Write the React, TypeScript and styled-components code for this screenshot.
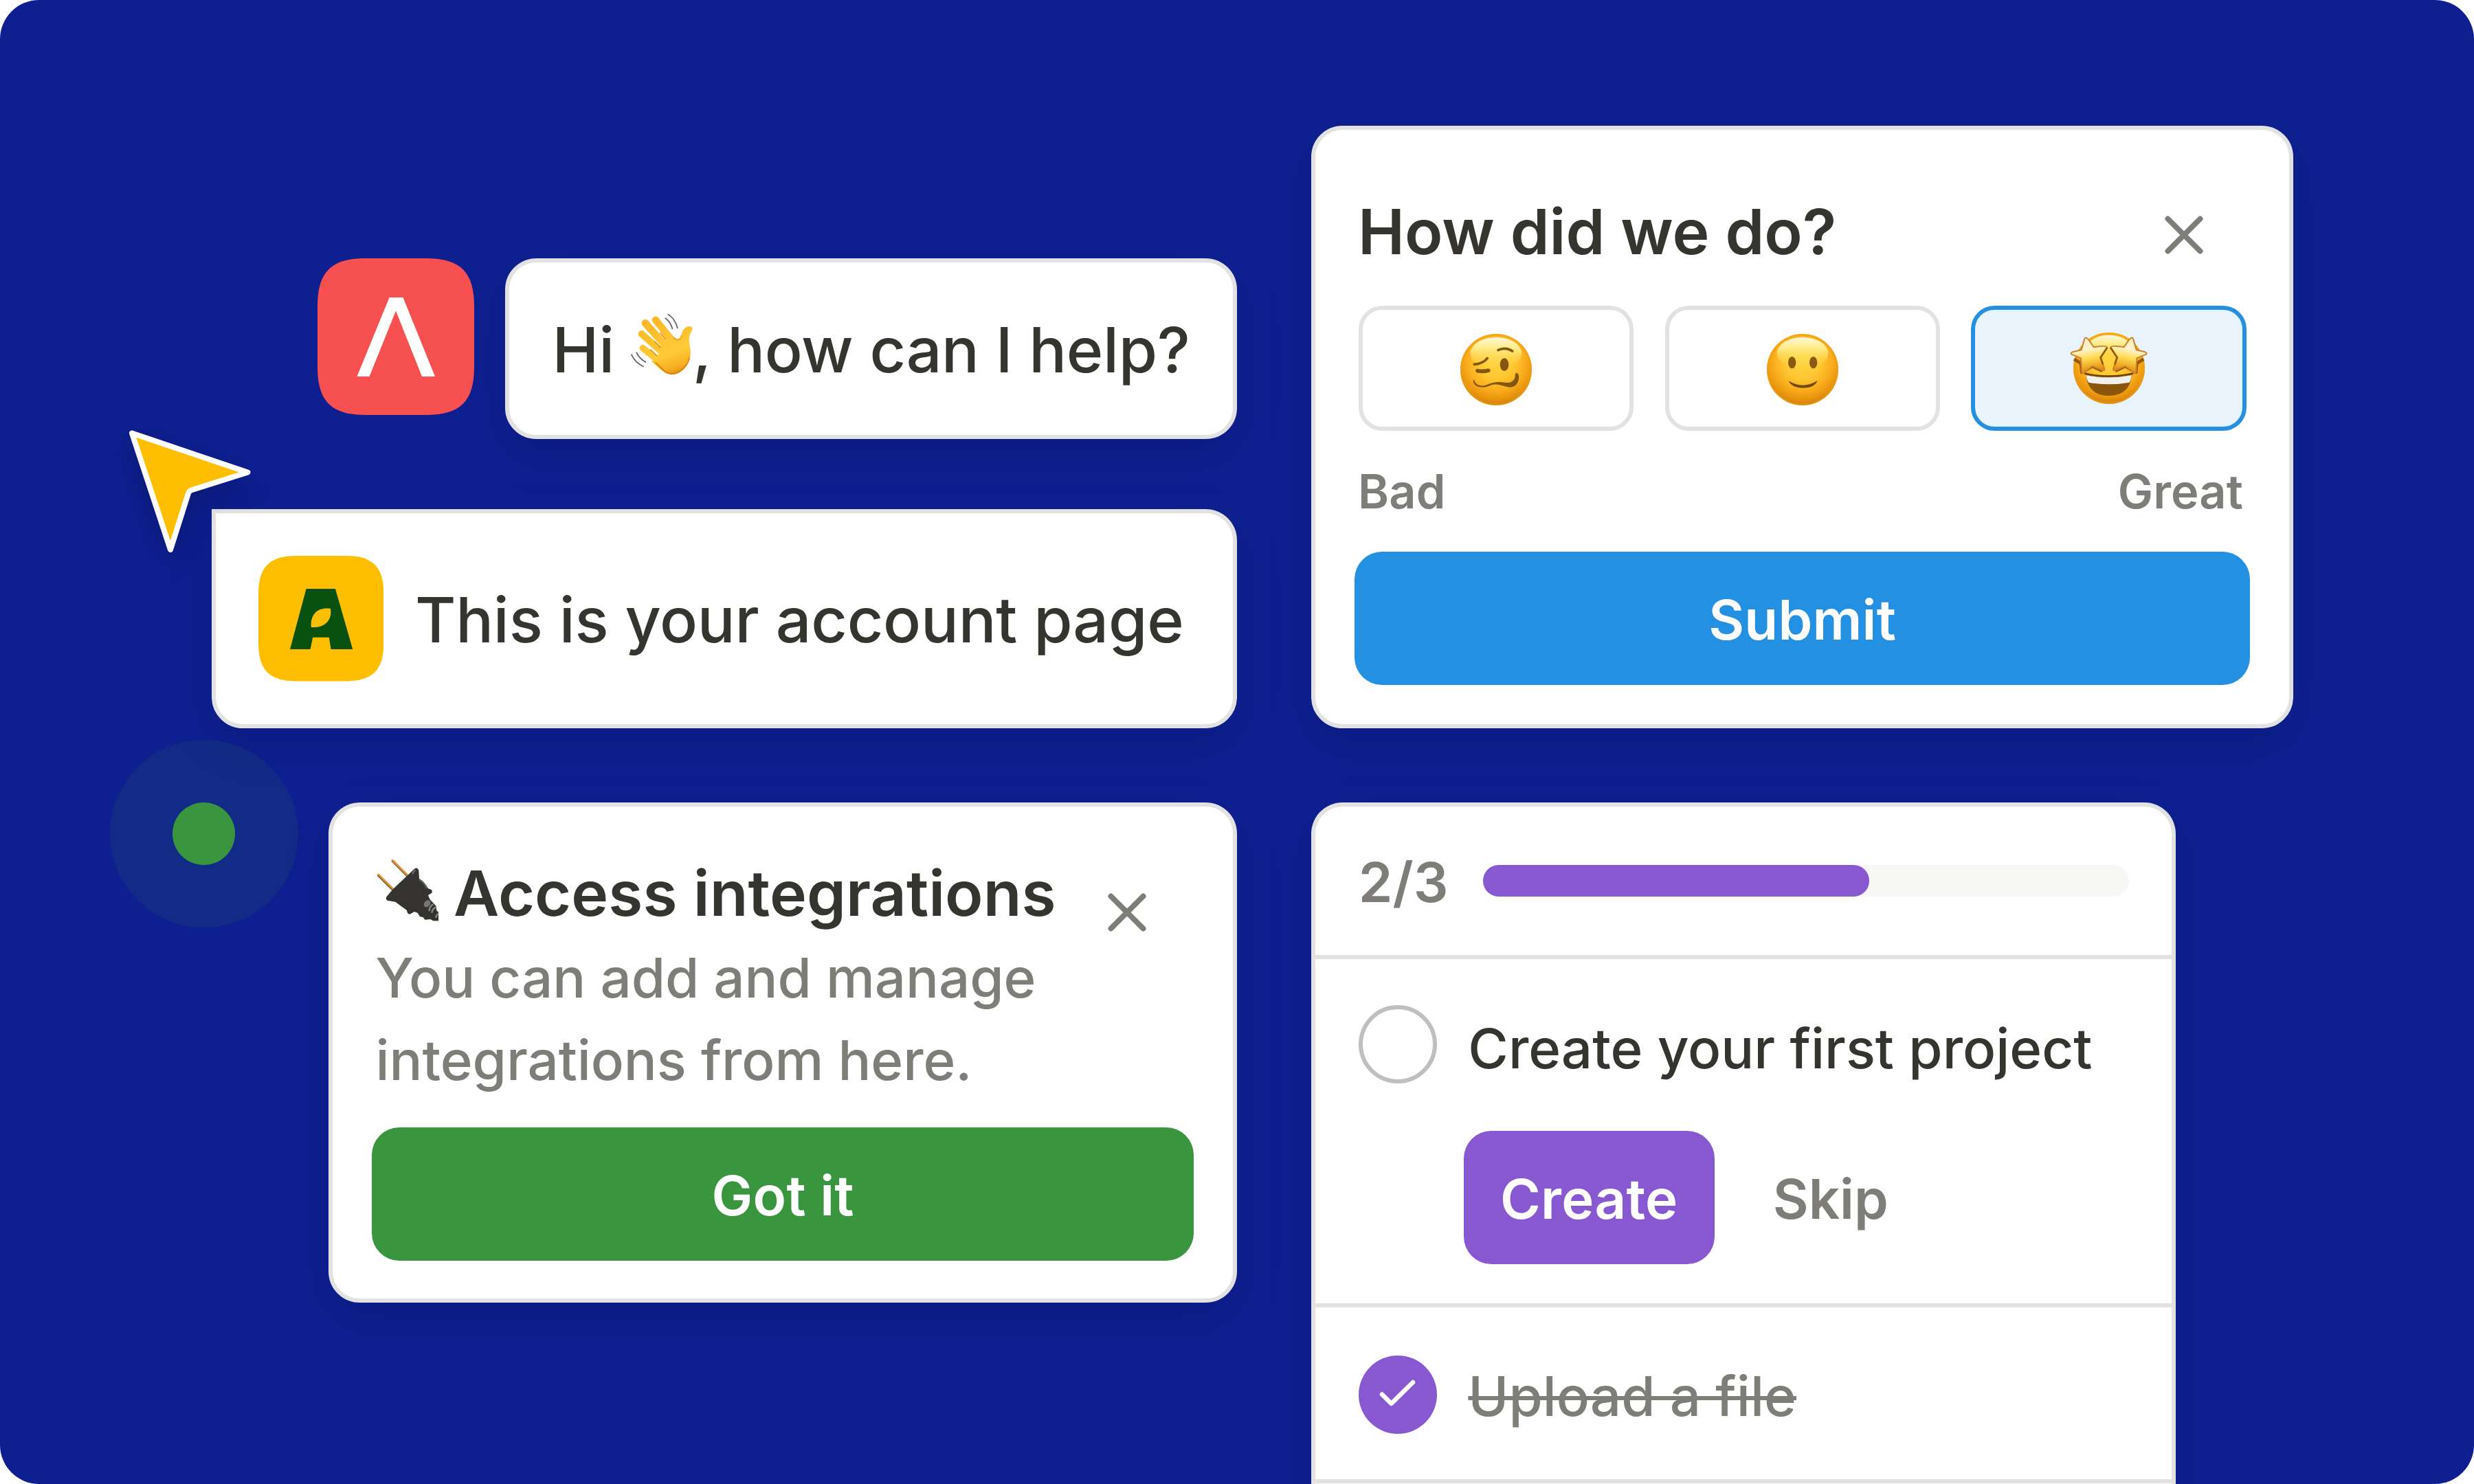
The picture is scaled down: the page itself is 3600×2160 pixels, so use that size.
import React from "react"
import styled, { createGlobalStyle } from "styled-components"


const App = () => {
  return (
    <>
      <GlobalStyle />
      <Canvas>
        <LeftColumn>
          <ChatRow>
            <RedLogo />
            <Bubble>
              <span>Hi</span>
              <WaveEmoji />
              <span>, how can I help?</span>
            </Bubble>
          </ChatRow>

          <CursorBubble>
            <YellowLogo />
            <span>This is your account page</span>
          </CursorBubble>

          <HintCard>
            <HintHead>
              <div>
                <HintTitle>
                  <PlugEmoji />
                  <span>Access integrations</span>
                </HintTitle>
                <HintText>
                  You can add and manage<br />integrations from here.
                </HintText>
              </div>
              <CloseIcon />
            </HintHead>
            <Button $color="#3a963e">Got it</Button>
          </HintCard>
        </LeftColumn>

        <RightColumn>
          <SurveyCard>
            <SurveyHead>
              <SurveyTitle>How did we do?</SurveyTitle>
              <CloseIcon />
            </SurveyHead>
            <Options>
              <Option><WoozyEmoji /></Option>
              <Option><SmileEmoji /></Option>
              <Option $active><StarEmoji /></Option>
            </Options>
            <Labels>
              <span>Bad</span>
              <span>Great</span>
            </Labels>
            <Button $color="#2390e1">Submit</Button>
          </SurveyCard>

          <Checklist>
            <Progress>
              <Count>2/3</Count>
              <Track><Fill /></Track>
            </Progress>
            <Task>
              <TaskLine>
                <Circle />
                <TaskName>Create your first project</TaskName>
              </TaskLine>
              <Actions>
                <CreateButton $color="#8858d1">Create</CreateButton>
                <Skip>Skip</Skip>
              </Actions>
            </Task>
            <DoneTask>
              <Circle $done>
                <svg width="60" height="60" viewBox="0 0 60 60" fill="none">
                  <path d="M7 29.5 20.5 43 52 12" stroke="#fff" strokeWidth="6.5" strokeLinecap="round" strokeLinejoin="round" />
                </svg>
              </Circle>
              <TaskName $done>Upload a file</TaskName>
            </DoneTask>
          </Checklist>
        </RightColumn>

        <Cursor />
        <Beacon><Dot /></Beacon>
      </Canvas>
    </>
  )
}

export default App


const RedLogo = () => (
  <svg width="228" height="228" viewBox="0 0 228 228">
    <path d="M0 70C0 20 20 0 70 0H158C208 0 228 20 228 70V158C228 208 208 228 158 228H70C20 228 0 208 0 158Z" fill="#f75050" />
    <path d="M104.500 57H124.500L171 172H152L114 76.500 75.500 172H57.500Z" fill="#fff" />
  </svg>
)

const YellowLogo = () => (
  <svg width="182.400" height="182.400" viewBox="0 0 228 228">
    <path d="M0 70C0 20 20 0 70 0H158C208 0 228 20 228 70V158C228 208 208 228 158 228H70C20 228 0 208 0 158Z" fill="#ffbf00" />
    <path fillRule="evenodd" d="M87 60H140L171.500 170H132L128.500 148.500H99L94.500 170H57.500ZM96 130C94 106 108 93 131 96C135 115 122 132 96 130Z" fill="#08510f" />
  </svg>
)

const CloseIcon = () => (
  <CloseSvg viewBox="0 0 56 56" fill="none">
    <path d="M4.500 4.500 51.500 51.500M51.500 4.500 4.500 51.500" stroke="#7e7d78" strokeWidth="8" strokeLinecap="round" />
  </CloseSvg>
)

const Cursor = () => (
  <CursorSvg viewBox="0 0 220 220">
    <path d="M32 30.500 200.500 87.500 118 113.500Q115 115 114 118L88 200Z" fill="#ffbf00" stroke="#fff" strokeWidth="8" strokeLinejoin="round" />
  </CursorSvg>
)

const WaveEmoji = () => (
  <WaveSvg viewBox="99 99 300 300" fill="none">
    <defs>
      <linearGradient id="hand" gradientUnits="userSpaceOnUse" x1="230" y1="130" x2="320" y2="385">
        <stop offset="0" stopColor="#ffb726" />
        <stop offset=".6" stopColor="#ffcb38" />
        <stop offset=".85" stopColor="#f7ae22" />
        <stop offset="1" stopColor="#d97f06" />
      </linearGradient>
    </defs>
    <g stroke="url(#hand)" strokeLinecap="round">
      <path d="M222 140 290 225" strokeWidth="31" />
      <path d="M177 154 270 258" strokeWidth="32" />
      <path d="M161 201 255 285" strokeWidth="30" />
      <path d="M166 263 250 330" strokeWidth="29" />
    </g>
    <path d="M300 212C315 233 331 230 335 205C338 182 354 166 372 168C384 170 386 180 378 191C368 205 367 225 370 248C375 272 376 290 371 308C360 350 325 378 292 378C258 377 240 352 205 322L240 285 243 262 267 232 275 215Z" fill="url(#hand)" />
    <g stroke="#e88f12" strokeWidth="5" strokeLinecap="round">
      <path d="M243 197 267 226" />
      <path d="M218 234 243 260" />
      <path d="M200 270 227 296" />
    </g>
    <path d="M300 215C315 232 331 230 335 207" stroke="#ee9d18" strokeWidth="5" />
    <path d="M221 326C250 350 266 376 292 376C325 376 358 348 370 306" stroke="#d98008" strokeWidth="5" />
    <g stroke="#686868" strokeWidth="5.500">
      <path d="M275 115Q307 134 318 177" />
      <path d="M263 131Q287 146 296 181" />
      <path d="M138 281Q150 309 180 325" />
      <path d="M116 290Q132 327 170 344" />
    </g>
  </WaveSvg>
)

const PlugEmoji = () => (
  <PlugSvg viewBox="80 80 274 280" fill="none">
    <g strokeLinecap="round">
      <path d="M151 97 215 161M89 160 152 222" stroke="#5b4526" strokeWidth="6" />
      <path d="M153 93 218 158M91 155 155 218" stroke="#dc9135" strokeWidth="9" />
    </g>
    <path d="M248 130Q262 121 267 138L269 172Q295 188 308 216L321 220Q330 229 322 237L308 245 316 264 343 292 345 312 360 325V357H330L318 350 294 352 287 342 272 338 262 322 248 317 228 328Q216 327 215 311L165 274 130 268Q120 262 127 251L155 218Z" fill="#34332f" />
    <path d="M269 176Q292 190 302 214" stroke="#6b6a67" strokeWidth="6" />
    <path d="M240 150 250 137" stroke="#6b6a67" strokeWidth="7" strokeLinecap="round" />
    <ellipse cx="304" cy="282" rx="13" ry="17" transform="rotate(40 304 282)" fill="#777673" />
    <path d="M330 284Q313 295 313 314M342 297Q325 306 324 322M353 325Q343 332 342 344" stroke="#8b8a87" strokeWidth="7" />
  </PlugSvg>
)

const FaceDefs = ({ id }: { id: string }) => (
  <defs>
    <radialGradient id={id + "-base"} cx=".5" cy=".38" r=".64">
      <stop offset="0" stopColor="#ffd341" />
      <stop offset=".4" stopColor="#fec631" />
      <stop offset=".64" stopColor="#f9ad1c" />
      <stop offset=".84" stopColor="#e8940e" />
      <stop offset="1" stopColor="#c47614" />
    </radialGradient>
    <linearGradient id={id + "-shine"} x1="0" y1="0" x2="0" y2="1">
      <stop offset="0" stopColor="#fff6dc" />
      <stop offset=".3" stopColor="#ffee90" />
      <stop offset="1" stopColor="#ffd53f" stopOpacity="0" />
    </linearGradient>
  </defs>
)

const WoozyEmoji = () => (
  <FaceSvg viewBox="128 73 324 324" fill="none">
    <FaceDefs id="woozy" />
    <circle cx="290" cy="235" r="156" fill="url(#woozy-base)" />
    <circle cx="290" cy="235" r="152" stroke="#f0a010" strokeOpacity=".6" strokeWidth="8" />
    <ellipse cx="290" cy="164" rx="112" ry="70" fill="url(#woozy-shine)" />
    <g stroke="#855611" strokeLinecap="round">
      <path d="M299 150Q330 134 361 154" strokeWidth="11" />
      <path d="M195 212Q233 209 252 185" strokeWidth="11" />
      <path d="M209 240Q233 245 256 239" strokeWidth="17" />
    </g>
    <ellipse cx="326" cy="213" rx="19" ry="28" fill="#855611" />
    <path d="M194 279C200 302 220 308 240 304C268 294 290 284 328 291C357 296 373 283 374 256Q375 247 382 250C390 256 391 268 388 280C382 303 368 312 350 312C320 309 300 293 270 302C250 312 225 316 208 308C193 300 189 289 191 280Z" fill="#855611" />
  </FaceSvg>
)

const SmileEmoji = () => (
  <FaceSvg viewBox="146 73 324 324" fill="none">
    <FaceDefs id="smile" />
    <circle cx="308" cy="235" r="156" fill="url(#smile-base)" />
    <circle cx="308" cy="235" r="152" stroke="#f0a010" strokeOpacity=".6" strokeWidth="8" />
    <ellipse cx="308" cy="164" rx="112" ry="70" fill="url(#smile-shine)" />
    <ellipse cx="262" cy="204" rx="17" ry="26" fill="#8a5a10" />
    <ellipse cx="355" cy="204" rx="17" ry="26" fill="#8a5a10" />
    <path d="M247 284Q308 323 373 283Q366 302 345 310Q308 321 274 309Q253 300 247 284Z" fill="#74480f" />
  </FaceSvg>
)

const StarEmoji = () => (
  <StarSvg viewBox="149 47 360 360" fill="none">
    <FaceDefs id="star" />
    <defs>
      <linearGradient id="starFill" x1="0" y1="0" x2=".2" y2="1">
        <stop offset="0" stopColor="#ffe9b8" />
        <stop offset=".4" stopColor="#fff4cc" />
        <stop offset=".64" stopColor="#ffdc55" />
        <stop offset="1" stopColor="#e6900f" />
      </linearGradient>
      <path id="starShape" d="M229 94 Q236 94 262 135Q318 126 320 136L292 180 309 230Q310 241 296 235L256 218 216 248Q208 251 209 238L206 183 165 166Q159 160 170 156L208 147 222 98Q224 93 229 94Z" />
    </defs>
    <circle cx="329" cy="227" r="156" fill="url(#star-base)" />
    <circle cx="329" cy="227" r="152" stroke="#f0a010" strokeOpacity=".6" strokeWidth="8" />
    <ellipse cx="329" cy="140" rx="95" ry="58" fill="url(#star-shine)" />
    <path d="M176 187 206 205 210 245 256 218 300 239M480 187 450 205 446 245 400 218 356 239" stroke="#96590a" strokeWidth="14" strokeLinejoin="round" />
    <use href="#starShape" fill="url(#starFill)" stroke="#c98030" strokeWidth="6" strokeLinejoin="round" />
    <use href="#starShape" transform="translate(656 0) scale(-1 1)" fill="url(#starFill)" stroke="#c98030" strokeWidth="6" strokeLinejoin="round" />
    <path d="M321 136 292 180 302 210M335 136 364 180 354 210" stroke="#925808" strokeWidth="8" />
    <path d="M222 250Q328 274 434 250" stroke="#704508" strokeWidth="8" />
    <path d="M229 258Q328 274 427 258C423 322 380 347 329 347C275 347 234 322 229 258Z" fill="#8a560c" />
    <path d="M229 258Q328 276 427 258Q426 276 418 289Q328 305 239 289Q231 276 229 258Z" fill="#f1f0f1" />
  </StarSvg>
)


const GlobalStyle = createGlobalStyle`
  * {
    box-sizing: border-box;
  }
  body {
    margin: 0;
    background: #fff;
    font-family: "Inter", "Liberation Sans", sans-serif;
  }
  svg {
    display: block;
    flex-shrink: 0;
  }
`
const Canvas = styled.div`
width: 3600px;
height: 2160px;
position: relative;
overflow: hidden;
display: flex;
gap: 108.200px;
border-radius: 57px;
background-color: #0e1f90;
color: #35342f;
`
const LeftColumn = styled.div`
width: 1800.200px;
padding-top: 376.300px;
display: flex;
flex-direction: column;
align-items: flex-end;
`
const RightColumn = styled.div`
padding-top: 182.800px;
display: flex;
flex-direction: column;
align-items: flex-start;
gap: 108.400px;
`
const Card = styled.div`
flex-shrink: 0;
background-color: #fff;
border: 6px solid #e2e2e2;
border-radius: 45.600px;
box-shadow: 0 23px 68px rgba(0, 0, 0, 0.1);
`
const ChatRow = styled.div`
display: flex;
gap: 45.600px;
`
const Bubble = styled(Card)`
width: 1065px;
height: 262.400px;
padding: 3px 0 0 62.400px;
display: flex;
align-items: center;
font-size: 91.200px;
line-height: 136.800px;
font-weight: 500;
letter-spacing: -0.300px;
white-space: pre;
`
const CursorBubble = styled(Bubble)`
width: 1492.700px;
height: 319.200px;
margin-top: 102.400px;
padding: 0 0 0 62.400px;
gap: 45.600px;
border-top-left-radius: 0;
letter-spacing: -0.200px;

span{
  padding-top: 3px;
}
`
const HintCard = styled(Card)`
width: 1322px;
height: 728.500px;
margin-top: 107.700px;
padding: 57px;
`
const HintHead = styled.div`
height: 409.800px;
padding: 1px 69.500px 0 5.400px;
display: flex;
justify-content: space-between;

> svg{
  margin-top: 68px;
}
`
const HintTitle = styled.div`
height: 132.500px;
padding-top: 5px;
display: flex;
align-items: center;
gap: 22px;
font-size: 91.200px;
line-height: 136.800px;
font-weight: 600;
letter-spacing: 0.080px;
white-space: nowrap;
`
const HintText = styled.div`
color: #7e7d78;
font-size: 79.800px;
line-height: 119.700px;
font-weight: 450;
letter-spacing: -0.080px;
white-space: nowrap;
`
const Button = styled.div<{ $color: string }>`
height: 193.800px;
padding-top: 4.500px;
display: flex;
align-items: center;
justify-content: center;
border-radius: 40px;
background-color: ${({ $color }) => $color};
color: #fff;
font-size: 79.800px;
font-weight: 600;
letter-spacing: 0.250px;
`
const SurveyCard = styled(Card)`
width: 1428.600px;
height: 876.800px;
padding: 80.500px 56.500px 0;
`
const SurveyHead = styled.div`
height: 175.500px;
padding: 0 68px 0 5.200px;
display: flex;
justify-content: space-between;

> svg{
  margin-top: 45px;
}
`
const SurveyTitle = styled.div`
font-size: 91.200px;
line-height: 136.800px;
font-weight: 600;
`
const Options = styled.div`
padding: 0 5.700px;
display: grid;
grid-template-columns: repeat(3, 1fr);
gap: 45.600px;
`
const Option = styled.div<{ $active?: boolean }>`
height: 182.400px;
display: flex;
align-items: center;
justify-content: center;
padding-top: ${({ $active }) => ($active ? "0" : "4px")};
border: 6px solid ${({ $active }) => ($active ? "#2390e1" : "#e2e2e2")};
border-radius: 34.200px;
background-color: ${({ $active }) => ($active ? "#e9f3fc" : "#fff")};
`
const Labels = styled.div`
margin: 37px 0 36.500px;
padding: 0 10.500px 0 5.200px;
display: flex;
justify-content: space-between;
color: #7e7d78;
font-size: 68.400px;
line-height: 102.600px;
font-weight: 600;
letter-spacing: 0.150px;
`
const Checklist = styled(Card)`
width: 1258px;
height: 1100px;
border-bottom: none;
border-radius: 45.600px 45.600px 0 0;
`
const Progress = styled.div`
height: 222.500px;
padding: 0 62.400px;
display: flex;
align-items: center;
justify-content: space-between;
border-bottom: 6px solid #e2e2e2;
`
const Count = styled.div`
padding-top: 4px;
color: #7e7d78;
font-size: 79.800px;
line-height: 120px;
font-weight: 600;
`
const Track = styled.div`
width: 940px;
height: 45.600px;
border-radius: 22.800px;
background-color: #f7f7f5;
`
const Fill = styled.div`
width: 562px;
height: 100%;
border-radius: 22.800px;
background-color: #8858d1;
`
const Task = styled.div`
height: 506.400px;
padding: 67px 62.400px 0;
border-bottom: 6px solid #e2e2e2;
`
const TaskLine = styled.div`
height: 114px;
display: flex;
gap: 45.600px;

> span{
  padding-top: 3.500px;
}
`
const DoneTask = styled.div`
height: 256px;
padding: 70.500px 62.400px 0;
display: flex;
gap: 45.600px;
border-bottom: 6px solid #e2e2e2;
`
const Circle = styled.div<{ $done?: boolean }>`
width: 114px;
height: 114px;
flex-shrink: 0;
display: flex;
align-items: center;
justify-content: center;
border-radius: 50%;
border: ${({ $done }) => ($done ? "none" : "6px solid #bfbfbc")};
background-color: ${({ $done }) => ($done ? "#8858d1" : "#fff")};
`
const TaskName = styled.span<{ $done?: boolean }>`
font-size: 79.800px;
line-height: 119.700px;
font-weight: ${({ $done }) => ($done ? 450 : 500)};
color: ${({ $done }) => ($done ? "#7e7d78" : "#35342f")};
text-decoration: ${({ $done }) => ($done ? "line-through 6px" : "none")};
white-space: nowrap;
`
const Actions = styled.div`
margin: 68.300px 0 0 153px;
display: flex;
align-items: center;
gap: 85px;
`
const CreateButton = styled(Button)`
width: 365px;
`
const Skip = styled.div`
padding-top: 4px;
color: #7e7d78;
font-size: 79.800px;
font-weight: 600;
`
const CloseSvg = styled.svg`
width: 56px;
height: 56px;
`
const WaveSvg = styled.svg`
width: 100px;
height: 100px;
margin: -13px -5px 0 19px;
`
const PlugSvg = styled.svg`
width: 91.300px;
height: 93.300px;
margin-top: -13px;
`
const FaceSvg = styled.svg`
width: 108px;
height: 108px;
`
const StarSvg = styled.svg`
width: 120px;
height: 120px;
`
const CursorSvg = styled.svg`
position: absolute;
left: 160px;
top: 600px;
width: 220px;
height: 220px;
overflow: visible;
filter: drop-shadow(0 12px 18px rgba(0, 0, 0, 0.2));
`
const Beacon = styled.div`
position: absolute;
left: 160px;
top: 1076.600px;
width: 273.600px;
height: 273.600px;
display: flex;
align-items: center;
justify-content: center;
border-radius: 50%;
background-color: rgba(58, 150, 62, 0.11);
`
const Dot = styled.div`
width: 91.200px;
height: 91.200px;
border-radius: 50%;
background-color: #3a963e;
`
